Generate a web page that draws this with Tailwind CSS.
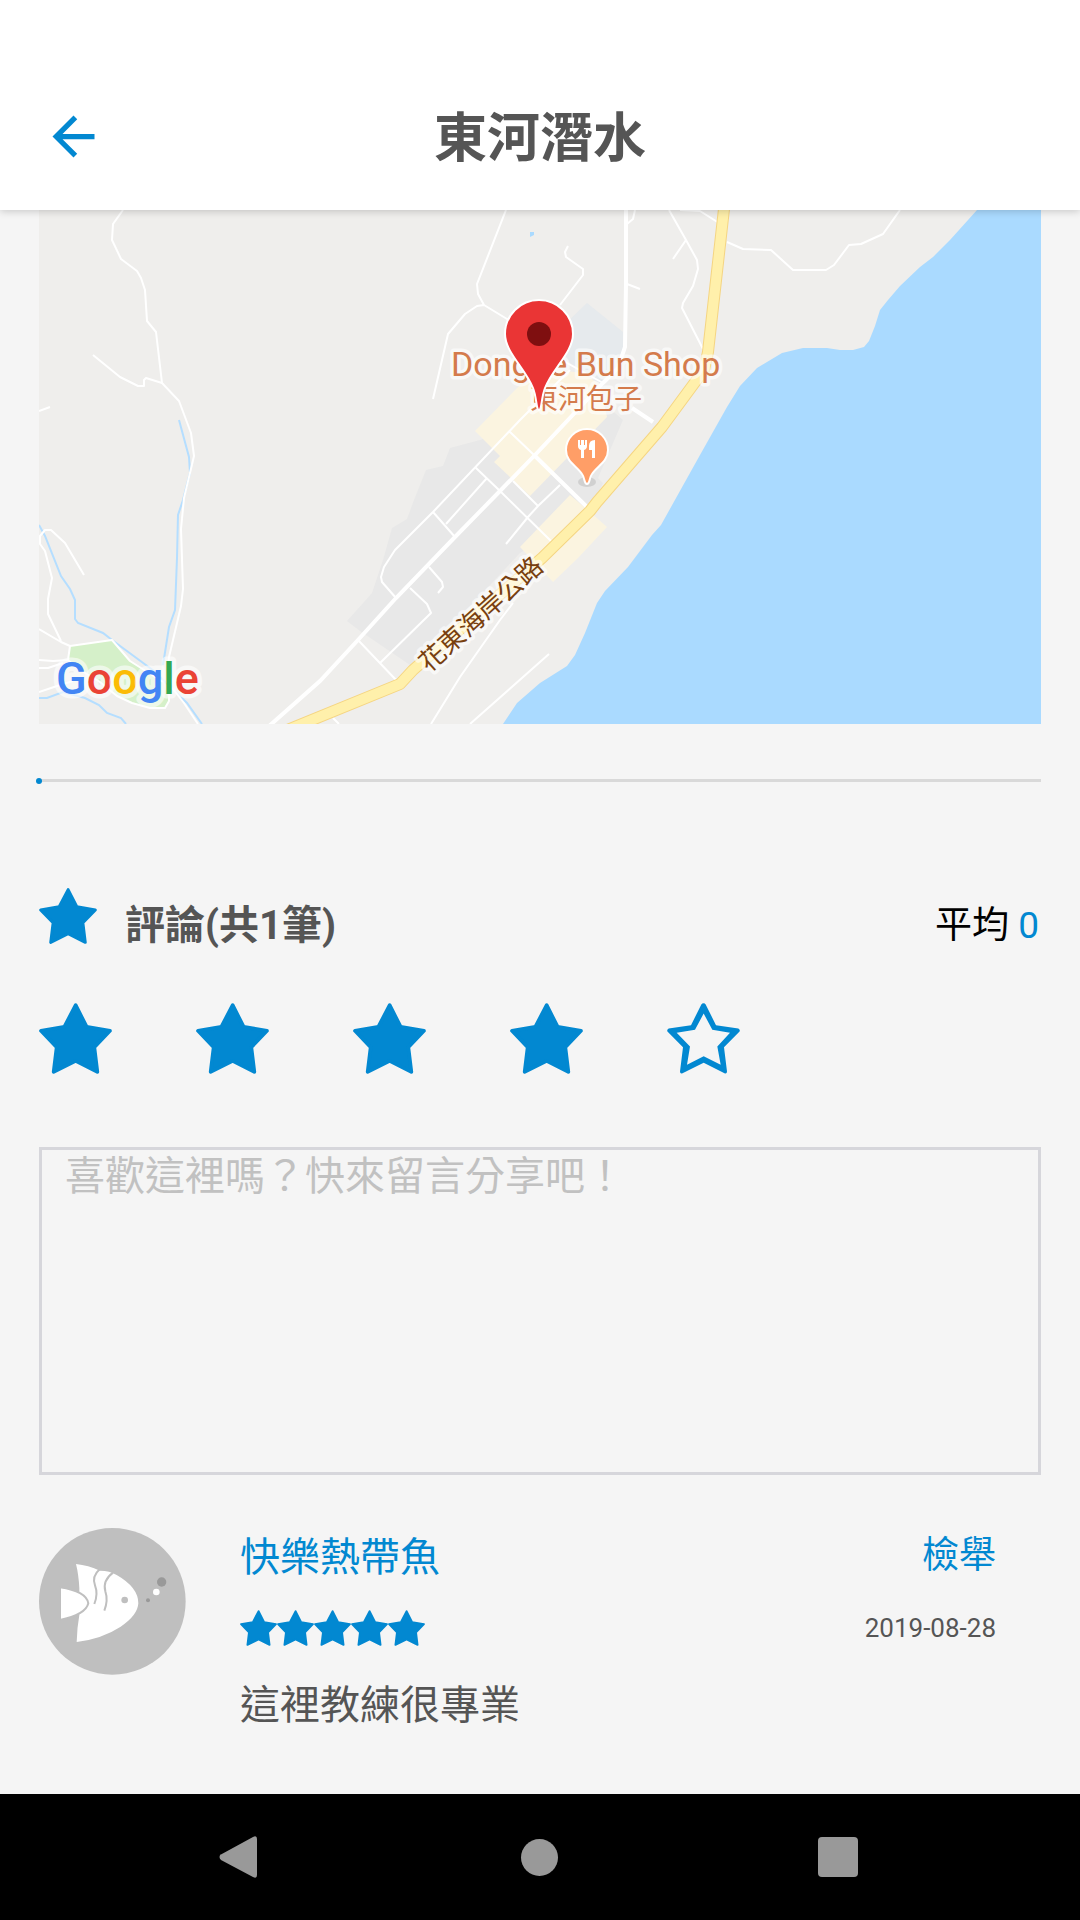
<!DOCTYPE html>
<html lang="zh-Hant">
<head>
<meta charset="utf-8">
<meta name="viewport" content="width=device-width, initial-scale=1">
<title>東河潛水</title>
<script src="https://cdn.jsdelivr.net/npm/@tailwindcss/browser@4"></script>
</head>
<body class="flex min-h-screen flex-col bg-[#f5f5f5] font-[Roboto,'Noto_Sans_CJK_TC',sans-serif] text-[#555]">

<svg class="hidden" aria-hidden="true">
  <symbol id="star" viewBox="0 0 219 212">
    <path d="M110 6 143 71 213 83 166 132 175 206 110 173 44 206 53 132 6 83 76 71Z" fill="currentColor" stroke="currentColor" stroke-width="11" stroke-linejoin="round"/>
  </symbol>
  <symbol id="star-outline" viewBox="0 0 219 212">
    <path d="M110 0Q114 0 116 4L147 66 214 76Q221 80 217 86L171 132 180 205Q180 212 174 211L110 179 45 211Q39 212 39 205L48 132 2 86Q-2 80 5 76L72 66 103 4Q105 0 110 0ZM110 31 84 80 29 89 69 130 60 185 110 159 161 185 151 130 189 89 136 80Z" fill="currentColor" fill-rule="evenodd"/>
  </symbol>
</svg>

<header class="sticky top-0 z-10 grid grid-cols-[105px_1fr_105px] items-center bg-white pt-[63px] shadow-[0_1px_8px_rgba(0,0,0,0.2)]">
  <button type="button" aria-label="返回" class="flex h-[147px] items-center justify-end text-[#0288d1]">
    <svg class="size-[63px]" viewBox="0 0 24 24" fill="currentColor"><path d="M20 11H7.83l5.59-5.59L12 4l-8 8 8 8 1.41-1.41L7.83 13H20z"/></svg>
  </button>
  <h1 class="pt-1 text-center text-[53px] leading-[72px] font-bold">東河潛水</h1>
</header>

<main class="flex flex-col px-[39px] pb-[60px]">
  <svg class="h-auto w-full" viewBox="39 210 1002 514" role="img" aria-label="地圖">
    <rect x="39" y="210" width="1002" height="514" fill="#efeeec"/>
    <!-- built-up areas -->
    <path fill="#e8e8e8" d="M480 440 450 448 443 466 426 470 414 500 407 519 392 528 383 560 372 593 347 621 360 631 413 667 520 553 590 510 603 483 598 478 623 420 600 400Z"/>
    <path fill="#e6eaed" d="M587 303 623 332V352L603 387 587 373 560 357 562 327Z"/>
    <path fill="#fbf4e0" d="M520 385 475 431 500 456 494 462 530 496 607 417 600 385 583 373 557 370ZM570 495 520 547 553 582 578 558 607 527 590 512Z"/>
    <path fill="#d5f0c9" d="M70 646 112 640 130 661 163 682 169 701 165 708H150L132 703 117 696 100 682 77 668 68 660Z"/>
    <!-- water -->
    <path fill="#aadaff" d="M977 210 950 240 933 257 920 267 900 286 888 300 880 310 875 326 869 341 864 347 853 350H840L827 348H803L782 353 757 368 740 386 727 407 700 455 661 525 652 535 628 567 605 591 597 603 585 633 575 655 567 666 540 683 517 703 503 724H1041V210ZM530 232H534V235L530 237Z"/>
    <g fill="none" stroke="#b5deff" stroke-width="2">
      <path d="M39 525 45 536 61 576 70 589 75 600V619L78 623 103 633 112 640 154 671 187 703 202 724"/>
      <path d="M179 420 189 457 190 473 183 500 178 515 177 558 175 610 169 627 163 665"/>
      <path d="M39 698H47L63 692 85 698 99 705 107 713 121 718 126 724"/>
    </g>
    <!-- minor roads -->
    <g fill="none" stroke="#fff" stroke-width="2" stroke-linejoin="round">
      <path d="M123 210 113 224 112 240 121 259 137 271 141 278 145 290 147 321 156 332 162 383 179 401 191 433 194 456 190 473 184 498 181 529 183 589 181 606 169 657 167 682 177 694 184 703 198 724"/>
      <path d="M93 355 120 377 138 386H144V380L146 378 162 383M39 411 50 407M84 575 65 543 51 530H45L40 536V544L45 551 52 578 48 599V614L61 641M39 629 61 642 70 646 112 640 130 661 163 682M70 646 68 660 53 661 39 660M39 668H48L63 663M39 692 57 686 73 681M68 660 77 668 100 682 117 696 132 703 150 708H165L169 701V682"/>
      <path d="M506 210 477 284 478 294 484 305 507 319 567 363 603 383M484 305 477 306 465 314 448 334 433 399M568 246 565 252 566 257 583 269V275L560 305M635 210 633 219 627 224M627 284 640 289M669 210 686 240 697 260 698 269 693 286 683 303 682 308 703 349M686 240 673 259M680 210 700 211 719 223M727 242 743 249 771 250 793 270H826L834 265 849 245 861 244 883 234 900 210"/>
      <path d="M570 370 520 420 433 512 395 550 384 567 381 577 382 582 396 598M510 432 534 455M476 468 500 491 552 542M487 478 446 524M433 512 455 537M513 481 538 506M560 485 538 506 528 517 506 544M429 567 442 582 443 587 438 593M410 588 427 604 431 613 380 663M358 640 397 681M513 603 500 620 460 677 431 724M549 654 470 724M333 718 339 724"/>
    </g>
    <path fill="none" stroke="#fff" stroke-width="4" d="M626 210V283L625 347 618 368 603 383 535 455 500 491 455 537 396 598 358 640 320 681 268 727M534 455 587 507M632 408 653 422"/>
    <!-- coastal highway -->
    <g fill="none" stroke-linejoin="round">
      <path stroke="#f5d582" stroke-width="12" d="M725 200 708 352 704 370 662 427 597 502 590 511 542 558 413 670 400 684 280 733"/>
      <path stroke="#fff0ab" stroke-width="10" d="M725 200 708 352 704 370 662 427 597 502 590 511 542 558 413 670 400 684 280 733"/>
    </g>
    <!-- place labels -->
    <g stroke="#fff" stroke-opacity=".6" stroke-width="7" stroke-linejoin="round" paint-order="stroke">
      <text x="451" y="376" font-size="34" fill="#d47b4c">Donghe Bun Shop</text>
      <text x="530" y="409" font-size="28" fill="#d47b4c">東河包子</text>
      <text transform="translate(429 673) rotate(-42)" font-size="26" fill="#78400f">花東海岸公路</text>
    </g>
    <!-- restaurant marker -->
    <ellipse cx="587" cy="482" rx="9" ry="5" fill="#000" opacity=".1"/>
    <path fill="#ff9e67" stroke="#fff" stroke-width="2" d="M587 484C584 484 585 478 582 474 577 466 566 462 566 450A21 21 0 0 1 608 450C608 462 597 466 592 474 589 478 590 484 587 484Z"/>
    <path fill="#fff" d="M578 440H580V445H581V440H584V445H585V440H587V446Q587 449 584 450V458H581V450Q578 449 578 446ZM595 440V458H592V450H589V446Q589 440 595 440Z"/>
    <!-- selected location pin -->
    <path fill="#ea3535" stroke="#fff" stroke-width="2" d="M539 410C536 410 537 398 533 388 525 368 505 352 505 334A34 34 0 0 1 573 334C573 352 553 368 545 388 541 398 542 410 539 410Z"/>
    <circle cx="539" cy="334" r="12" fill="#7f0f10"/>
    <text x="56" y="694" font-size="45" font-weight="500" stroke="#fff" stroke-opacity=".6" stroke-width="9" stroke-linejoin="round" paint-order="stroke"><tspan fill="#4285f4">G</tspan><tspan fill="#ea4335">o</tspan><tspan fill="#fbbc05">o</tspan><tspan fill="#4285f4">g</tspan><tspan fill="#34a853">l</tspan><tspan fill="#ea4335">e</tspan></text>
  </svg>

  <div class="relative mt-[55px] h-[3px] bg-[#d9d9d9]">
    <span class="absolute -top-px -left-[3px] size-[6px] rounded-full bg-[#0288d1]"></span>
  </div>

  <section class="mt-[104px] flex flex-col">
    <div class="flex items-center">
      <svg class="mb-2 h-[56px] w-[58px] text-[#0288d1]" aria-hidden="true"><use href="#star"/></svg>
      <h2 class="mt-3 ml-[28px] text-[40px] leading-[56px] font-bold">評論(共1筆)</h2>
      <p class="mt-3 mr-[2px] ml-auto text-[37px] leading-[56px] text-black">平均 <span class="text-[#0288d1]">0</span></p>
    </div>
    <div class="mt-[49px] flex gap-[84px] text-[#0288d1]">
      <button type="button" aria-label="1 星"><svg class="h-[71px] w-[73px]"><use href="#star"/></svg></button>
      <button type="button" aria-label="2 星"><svg class="h-[71px] w-[73px]"><use href="#star"/></svg></button>
      <button type="button" aria-label="3 星"><svg class="h-[71px] w-[73px]"><use href="#star"/></svg></button>
      <button type="button" aria-label="4 星"><svg class="h-[71px] w-[73px]"><use href="#star"/></svg></button>
      <button type="button" aria-label="5 星"><svg class="h-[71px] w-[73px]"><use href="#star-outline"/></svg></button>
    </div>
    <textarea aria-label="留言" placeholder="喜歡這裡嗎？快來留言分享吧！" class="mt-[73px] block h-[328px] w-full resize-none border-[3px] border-[#d6d6db] bg-transparent px-[23px] text-[40px] leading-[54px] outline-none placeholder:text-[#c1c1c1]"></textarea>
  </section>

  <article class="mt-[53px] flex items-start">
    <svg class="size-[147px] shrink-0" viewBox="0 0 441 441" role="img" aria-label="快樂熱帶魚">
      <circle cx="220" cy="220" r="220" fill="#bfbfbf"/>
      <path fill="#fff" d="M111 108Q148 112 183 128 212 128 233 141 298 178 298 226 296 262 245 296 190 332 113 342 114 300 121 261L121 181Q119 140 111 108Z"/>
      <path fill="#fff" stroke="#bfbfbf" stroke-width="6" d="M63 178Q142 190 148 226 140 260 63 276Z"/>
      <g fill="none" stroke="#bfbfbf" stroke-width="6"><path d="M182 124Q158 145 168 172 178 198 166 228" /><path d="M222 134Q190 158 199 190 208 216 196 248"/></g>
      <circle cx="257" cy="216" r="10" fill="#bfbfbf"/>
      <circle cx="327" cy="217" r="6" fill="#999"/><circle cx="352" cy="192" r="10" fill="#fff"/><circle cx="368" cy="162" r="14" fill="#999"/>
    </svg>
    <div class="ml-[54px] flex flex-col pt-[2px]">
      <h3 class="text-[40px] leading-[56px] text-[#0288d1]">快樂熱帶魚</h3>
      <div class="mt-[24px] flex text-[#0288d1]" role="img" aria-label="5 星">
        <svg class="h-[36px] w-[37px]"><use href="#star"/></svg>
        <svg class="h-[36px] w-[37px]"><use href="#star"/></svg>
        <svg class="h-[36px] w-[37px]"><use href="#star"/></svg>
        <svg class="h-[36px] w-[37px]"><use href="#star"/></svg>
        <svg class="h-[36px] w-[37px]"><use href="#star"/></svg>
      </div>
      <p class="mt-[32px] text-[40px] leading-[56px]">這裡教練很專業</p>
    </div>
    <div class="mr-[45px] ml-auto flex flex-col items-end pt-[3px]">
      <button type="button" class="text-[37px] leading-[50px] text-[#0288d1]">檢舉</button>
      <time datetime="2019-08-28" class="mt-[29px] text-[26px] leading-[36px]">2019-08-28</time>
    </div>
  </article>
</main>

<nav class="sticky bottom-0 mt-auto flex h-[126px] items-center justify-center gap-[200px] bg-black pr-[2px] text-[#999]">
  <button type="button" aria-label="返回" class="flex w-[99px] justify-center"><svg class="size-[42px]" viewBox="0 0 42 42" fill="currentColor"><path d="M1 19 34 1Q38-1 38 3V39Q38 43 34 41L2 24Q-1 21 2 18Z"/></svg></button>
  <button type="button" aria-label="主畫面" class="flex w-[99px] justify-center"><span class="size-[37px] rounded-full bg-[#999]"></span></button>
  <button type="button" aria-label="最近使用" class="flex w-[99px] justify-center"><span class="size-[40px] rounded-[4px] bg-[#999]"></span></button>
</nav>
</body>
</html>
